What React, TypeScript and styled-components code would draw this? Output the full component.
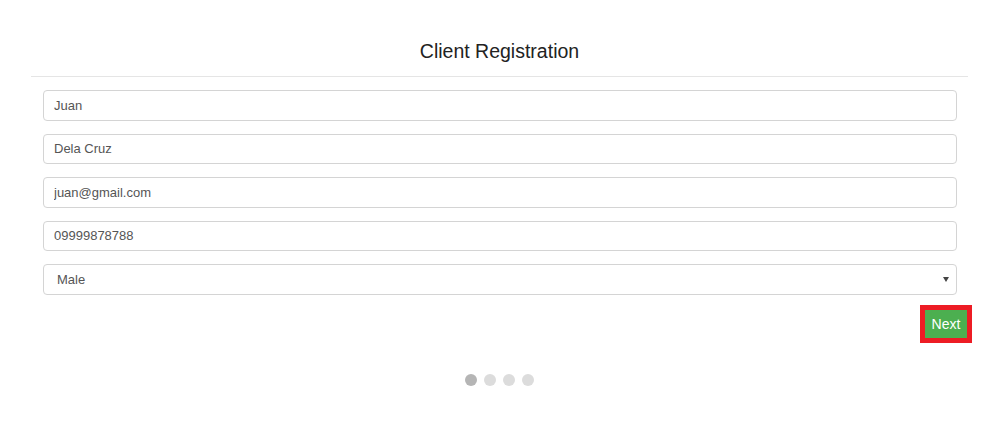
import React from "react";
import styled, { createGlobalStyle } from "styled-components";

const Global = createGlobalStyle`
  html, body { margin: 0; padding: 0; background: #fff; }
  body { font-family: "Liberation Sans", Arial, Helvetica, sans-serif; }
  * { box-sizing: border-box; }
`;

const Card = styled.div`
  margin: 0 32px 0 31px;
  display: flex;
  flex-direction: column;
`;

const Header = styled.div`
  padding: 39px 0 13px;
  border-bottom: 1px solid #e5e5e5;
  text-align: center;
`;

const Title = styled.h3`
  margin: 0;
  font-size: 19.5px;
  line-height: 24px;
  font-weight: normal;
  color: #222;
`;

const Form = styled.div`
  display: flex;
  flex-direction: column;
  gap: 13px;
  padding: 13px 11px 0 12px;
`;

const Input = styled.input`
  display: block;
  width: 100%;
  height: 30.5px;
  padding: 0 10px;
  border: 1px solid #d4d4d4;
  border-radius: 4px;
  font-family: "Liberation Sans", Arial, Helvetica, sans-serif;
  font-size: 13px;
  color: #555;
  background: #fff;
  outline: none;
`;

const SelectWrap = styled.div`
  position: relative;
  &::after {
    content: "";
    position: absolute;
    right: 8px;
    top: 50%;
    margin-top: -2px;
    border-left: 3px solid transparent;
    border-right: 3px solid transparent;
    border-top: 5px solid #444;
  }
`;

const Select = styled.select`
  display: block;
  width: 100%;
  height: 30.5px;
  padding: 0 10px 0 13px;
  border: 1px solid #d4d4d4;
  border-radius: 4px;
  font-family: "Liberation Sans", Arial, Helvetica, sans-serif;
  font-size: 13px;
  color: #555;
  background: #fff;
  appearance: none;
  -webkit-appearance: none;
  outline: none;
`;

const ButtonRow = styled.div`
  display: flex;
  justify-content: flex-end;
  padding: 15px 1px 0 0;
`;

const NextButton = styled.button`
  height: 28px;
  width: 42px;
  padding: 0;
  border: none;
  background: #4caf50;
  color: #fff;
  font-family: "Liberation Sans", Arial, Helvetica, sans-serif;
  font-size: 14px;
  outline: 5px solid #ed1c24;
  cursor: pointer;
`;

const Dots = styled.div`
  display: flex;
  justify-content: center;
  gap: 7px;
  padding: 36px 0 0 0;
`;

const Dot = styled.span<{ $active?: boolean }>`
  width: 12px;
  height: 12px;
  border-radius: 50%;
  background: ${(p) => (p.$active ? "#b5b5b5" : "#dcdcdc")};
`;

export default function App() {
  return (
    <>
      <Global />
      <Card>
        <Header>
          <Title>Client Registration</Title>
        </Header>
        <Form>
          <Input defaultValue="Juan" />
          <Input defaultValue="Dela Cruz" />
          <Input defaultValue="juan@gmail.com" />
          <Input defaultValue="09999878788" />
          <SelectWrap>
            <Select defaultValue="Male">
              <option>Male</option>
              <option>Female</option>
            </Select>
          </SelectWrap>
        </Form>
        <ButtonRow>
          <NextButton>Next</NextButton>
        </ButtonRow>
        <Dots>
          <Dot $active />
          <Dot />
          <Dot />
          <Dot />
        </Dots>
      </Card>
    </>
  );
}
